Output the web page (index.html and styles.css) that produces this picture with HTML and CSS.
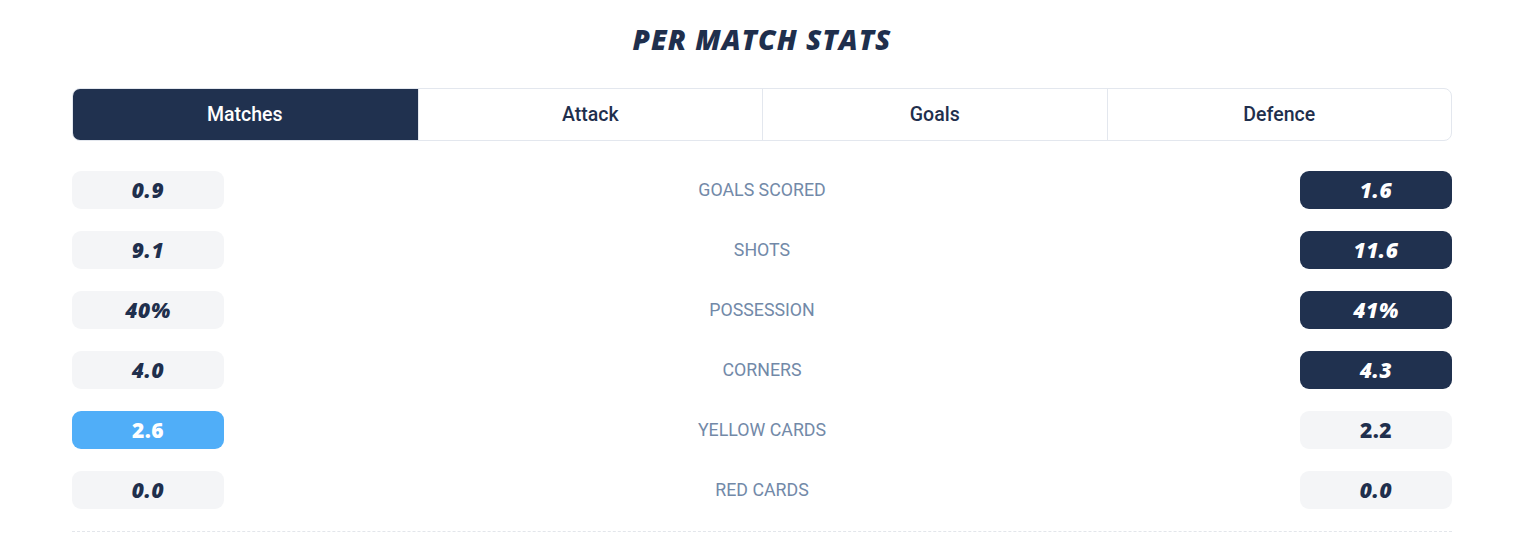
FILE: index.html
```html
<!DOCTYPE html>
<html>
<head>
<meta charset="utf-8">
<link rel="stylesheet" href="styles.css">
</head>
<body>
<section class="stats">
  <h2 class="title">PER MATCH STATS</h2>
  <div class="tabs">
    <div class="tab active">Matches</div>
    <div class="tab">Attack</div>
    <div class="tab">Goals</div>
    <div class="tab">Defence</div>
  </div>
  <div class="rows">
    <div class="row">
      <div class="val light">0.9</div>
      <div class="label">GOALS SCORED</div>
      <div class="val dark">1.6</div>
    </div>
    <div class="row">
      <div class="val light">9.1</div>
      <div class="label">SHOTS</div>
      <div class="val dark">11.6</div>
    </div>
    <div class="row">
      <div class="val light">40%</div>
      <div class="label">POSSESSION</div>
      <div class="val dark">41%</div>
    </div>
    <div class="row">
      <div class="val light">4.0</div>
      <div class="label">CORNERS</div>
      <div class="val dark">4.3</div>
    </div>
    <div class="row">
      <div class="val blue upright">2.6</div>
      <div class="label">YELLOW CARDS</div>
      <div class="val light upright">2.2</div>
    </div>
    <div class="row">
      <div class="val light">0.0</div>
      <div class="label">RED CARDS</div>
      <div class="val light">0.0</div>
    </div>
  </div>
  <div class="divider"></div>
</section>
</body>
</html>
```
FILE: styles.css
```css
* { box-sizing: border-box; }
html, body { margin: 0; padding: 0; background: #fff; }
body { font-family: Roboto, "Liberation Sans", sans-serif; }

.stats {
  width: 1380px;
  margin-left: 72px;
  padding-top: 22px;
}

.title {
  margin: 0;
  text-align: center;
  font-family: "Open Sans", "DejaVu Sans", sans-serif;
  font-style: italic;
  font-weight: 800;
  font-size: 28px;
  line-height: 34px;
  letter-spacing: 1px;
  color: #1f2f4d;
}

.tabs {
  margin-top: 32px;
  display: grid;
  grid-template-columns: repeat(4, 1fr);
  height: 53px;
  border: 1px solid #e3e7ee;
  border-radius: 8px;
  overflow: hidden;
}

.tab {
  display: flex;
  align-items: center;
  justify-content: center;
  font-size: 19.5px;
  font-weight: 500;
  color: #1f2f4d;
  border-left: 1px solid #e3e7ee;
}
.tab:first-child { border-left: none; }
.tab.active { background: #20314f; color: #fff; margin: -1px 0 -1px -1px; }

.rows {
  margin-top: 30px;
  display: flex;
  flex-direction: column;
  gap: 22px;
}

.row {
  display: flex;
  align-items: center;
  justify-content: space-between;
  height: 38px;
}

.val {
  width: 152px;
  height: 38px;
  border-radius: 9px;
  display: flex;
  align-items: center;
  justify-content: center;
  font-family: "Open Sans", "DejaVu Sans", sans-serif;
  font-style: italic;
  font-weight: 800;
  font-size: 21px;
  letter-spacing: 0.5px;
}
.val.upright { font-style: normal; }
.val.light { background: #f4f5f7; color: #1f2f4d; }
.val.dark { background: #20314f; color: #fff; }
.val.blue { background: #50aef8; color: #fff; }

.label {
  font-size: 17.8px;
  line-height: 20px;
  color: #7289a8;
  padding-bottom: 1px;
}

.divider {
  margin-top: 22px;
  border-top: 1px dashed #e3e6eb;
}
```
